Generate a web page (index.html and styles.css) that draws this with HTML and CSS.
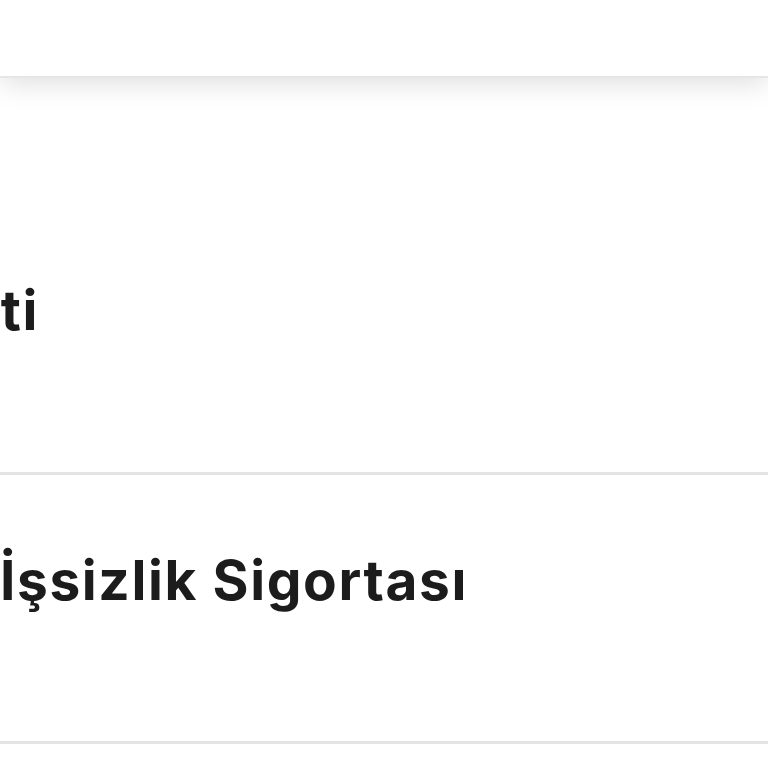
FILE: index.html
```html
<!DOCTYPE html>
<html lang="tr">
<head>
<meta charset="utf-8">
<link rel="stylesheet" href="styles.css">
</head>
<body>
<header class="topbar"></header>
<main class="list">
  <div class="row row-first"><span class="label label-cut">Kıdem Tazminatı Hesaplama Hizmeti</span></div>
  <div class="row"><span class="label">İşsizlik Sigortası</span></div>
  <div class="row"></div>
</main>
</body>
</html>
```
FILE: styles.css
```css
html, body {
  margin: 0;
  padding: 0;
  background: #fff;
  overflow: hidden;
}
body {
  width: 768px;
  height: 768px;
  font-family: "Inter", "Lato", sans-serif;
  color: #1c1c1c;
  position: relative;
}
.topbar {
  height: 76px;
  background: #fff;
  box-shadow: 0 4px 30px rgba(0, 0, 0, 0.14);
  border-bottom: 2px solid #e6e6e6;
  position: relative;
  z-index: 2;
}
.list {
  display: flex;
  flex-direction: column;
}
.row {
  height: 269px;
  border-bottom: 3px solid #e4e4e4;
  box-sizing: border-box;
  display: flex;
  align-items: flex-start;
  padding-top: 70px;
  overflow: hidden;
}
.row-first {
  height: 397px;
  padding-top: 197px;
}
.label {
  font-size: 55px;
  font-weight: 700;
  line-height: 70px;
  white-space: nowrap;
  letter-spacing: 1.6px;
}
.label-cut {
  display: flex;
  justify-content: flex-end;
  margin-left: -900px;
  width: 939px;
  flex: 0 0 auto;
}
```
